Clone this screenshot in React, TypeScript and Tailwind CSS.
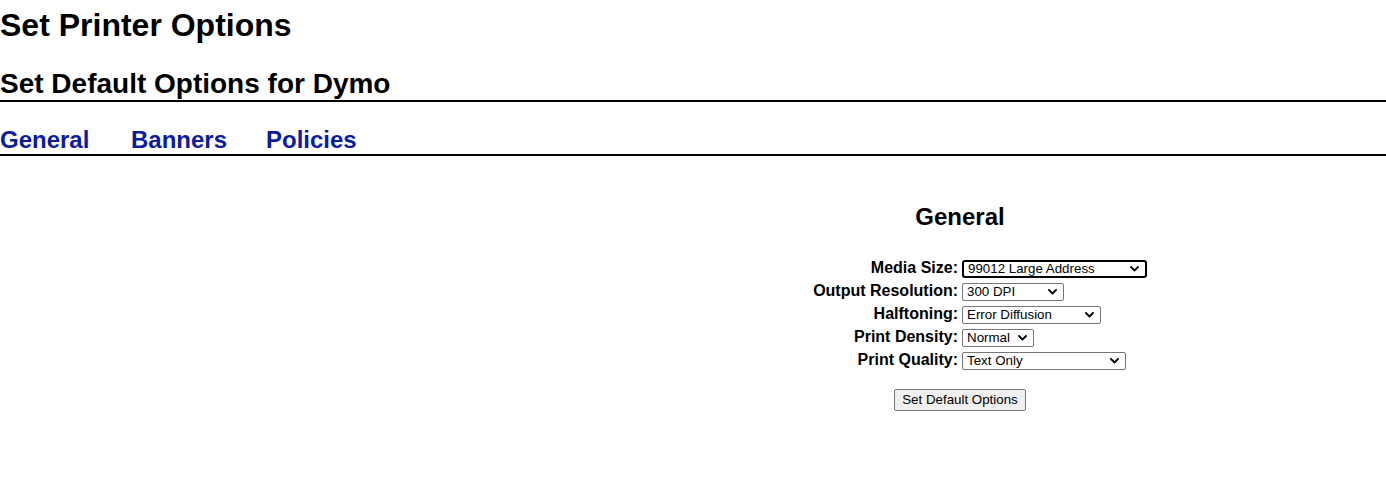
import React from "react";

const font = { fontFamily: '"Liberation Sans", Arial, sans-serif' };

function Chevron() {
  return (
    <svg width="9" height="6" viewBox="0 0 9 6" className="shrink-0">
      <path d="M1 1 L4.5 4.5 L8 1" fill="none" stroke="#000" strokeWidth="1.8" strokeLinecap="round" strokeLinejoin="round" />
    </svg>
  );
}

function FakeSelect({ value, width, focused }: { value: string; width: number; focused?: boolean }) {
  return (
    <div
      className={
        "flex h-[18px] items-center justify-between pl-[4px] pr-[6px] bg-white text-[13.33px] leading-[16px] text-black " +
        (focused
          ? "rounded-[3px] border-2 border-black pl-[3px] pr-[5px]"
          : "rounded-[2px] border border-[#767676]")
      }
      style={{ width }}
    >
      <span className="whitespace-nowrap">{value}</span>
      <Chevron />
    </div>
  );
}

const rows: { label: string; value: string; width: number; focused?: boolean }[] = [
  { label: "Media Size:", value: "99012 Large Address", width: 185, focused: true },
  { label: "Output Resolution:", value: "300 DPI", width: 102 },
  { label: "Halftoning:", value: "Error Diffusion", width: 139 },
  { label: "Print Density:", value: "Normal", width: 72 },
  { label: "Print Quality:", value: "Text Only", width: 164 },
];

export default function App() {
  return (
    <div className="min-h-[503px] w-full bg-white text-black" style={font}>
      <h1 className="pt-[7px] text-[32px] font-bold leading-[37px]">Set Printer Options</h1>
      <h2 className="mt-[24px] border-b-2 border-black text-[28px] font-bold leading-[32px]">
        Set Default Options for Dymo
      </h2>
      <div className="flex border-b-2 border-black pt-[24px] text-[24px] font-bold leading-[28px] text-[#0b1c9c]">
        <a className="w-[131px]">General</a>
        <a className="w-[135px]">Banners</a>
        <a>Policies</a>
      </div>
      <div className="flex">
        <div className="w-[534px] shrink-0" />
        <div className="flex flex-1 flex-col items-center">
          <h3 className="mt-[47px] text-[24px] font-bold leading-[28px]">General</h3>
          <div className="mt-[28px] grid w-full grid-cols-2 items-baseline gap-x-[4px] gap-y-[4px]">
            {rows.map((r) => (
              <React.Fragment key={r.label}>
                <div className="text-right text-[16px] font-bold leading-[18px]">{r.label}</div>
                <div className="flex">
                  <FakeSelect value={r.value} width={r.width} focused={r.focused} />
                </div>
              </React.Fragment>
            ))}
          </div>
          <button className="mt-[19px] h-[22px] rounded-[2px] border border-[#767676] bg-[#efefef] px-[7px] text-[13.33px] leading-[16px] text-black">
            Set Default Options
          </button>
        </div>
      </div>
    </div>
  );
}
